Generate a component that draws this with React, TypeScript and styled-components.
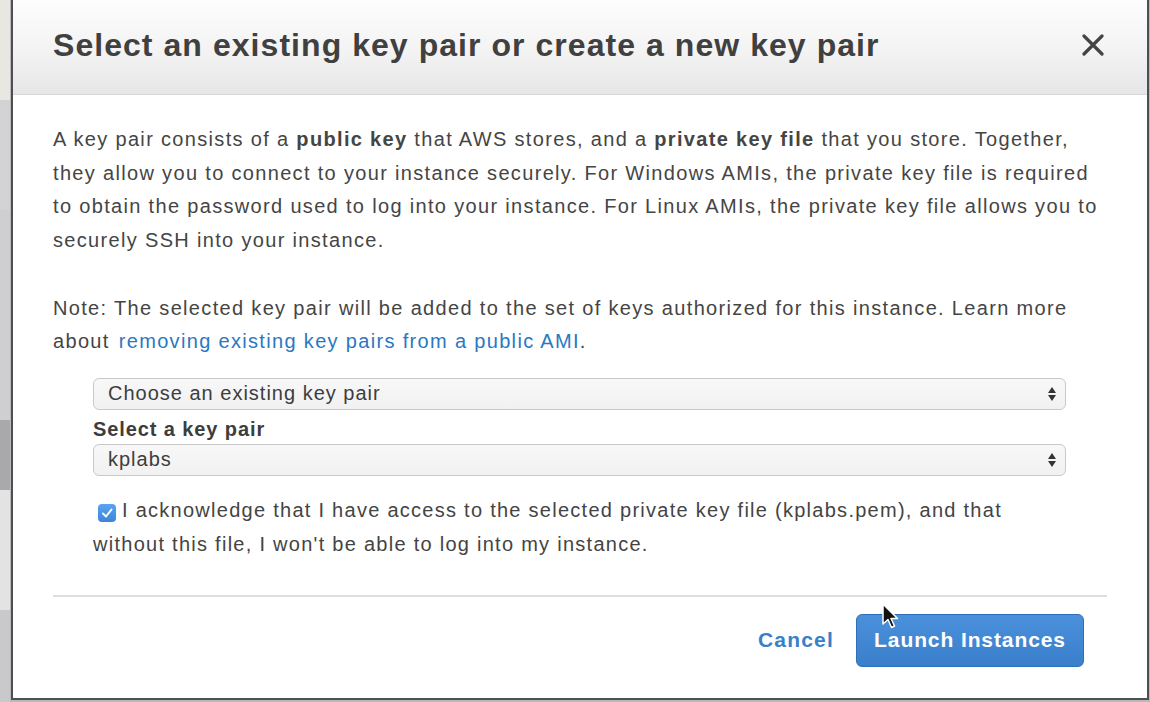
import React from "react";
import styled, { createGlobalStyle } from "styled-components";

const Global = createGlobalStyle`
  html, body { margin: 0; padding: 0; }
  body {
    width: 1150px; height: 702px; overflow: hidden;
    background: #b9b9bb;
    font-family: "Liberation Sans", Arial, Helvetica, sans-serif;
  }
`;

const Page = styled.div`
  position: relative;
  display: flex;
  width: 1150px;
  height: 702px;
`;

const Backdrop = styled.div`
  width: 10px;
  display: flex;
  flex-direction: column;
  background: #c7c7c9;
  overflow: hidden;
`;

const BackdropBand = styled.div<{ $bg: string; $h: number }>`
  height: ${(p) => p.$h}px;
  background: ${(p) => p.$bg};
  flex: none;
`;

const Dialog = styled.div`
  width: 1134px;
  height: 698px;
  margin-left: 1px;
  background: #fff;
  border-left: 2px solid #4f4f53;
  border-right: 2px solid #4f4f53;
  border-bottom: 2px solid #4f4f53;
  display: flex;
  flex-direction: column;
  box-sizing: content-box;
`;

const Header = styled.div`
  height: 94px;
  flex: none;
  display: flex;
  align-items: center;
  justify-content: space-between;
  padding: 0 41px 0 40px;
  background: linear-gradient(to bottom, #fdfdfd 0%, #f3f3f3 55%, #e6e6e6 100%);
  border-bottom: 1px solid #d8d8d8;
`;

const Title = styled.h1`
  margin: 0;
  font-size: 32px;
  font-weight: 700;
  color: #404040;
  letter-spacing: 1.05px;
  padding-bottom: 4px;
  white-space: nowrap;
`;

const CloseButton = styled.button`
  border: 0;
  background: transparent;
  padding: 0;
  width: 26px;
  height: 26px;
  display: flex;
  align-items: center;
  justify-content: center;
  cursor: pointer;
  margin-bottom: 4px;
`;

const Body = styled.div`
  padding: 28px 40px 0 40px;
  display: flex;
  flex-direction: column;
  color: #454545;
  font-size: 20px;
  letter-spacing: 1.33px;
  line-height: 33.7px;
  white-space: nowrap;
`;

const Para = styled.p<{ $mb?: number }>`
  margin: 0 0 ${(p) => p.$mb ?? 0}px 0;
`;

const Link = styled.a`
  color: #2a78c2;
  text-decoration: none;
  margin-left: 9px;
`;

const Form = styled.div`
  margin: 19px 81px 0 80px;
  display: flex;
  flex-direction: column;
`;

const SelectBox = styled.div`
  height: 30px;
  border: 1px solid #c9c9c9;
  border-radius: 6px;
  background: linear-gradient(to bottom, #f8f8f8, #f1f1f1);
  display: flex;
  align-items: center;
  justify-content: space-between;
  padding: 0 8px 0 14px;
  font-size: 20px;
  letter-spacing: 1px;
  color: #3d3d3d;
`;

const FieldLabel = styled.div`
  font-weight: 700;
  font-size: 20px;
  letter-spacing: 0.9px;
  color: #3d3d3d;
  line-height: 22px;
  margin: 8px 0 4px 0;
`;

const Ack = styled.div`
  margin-top: 17px;
  font-size: 20px;
  letter-spacing: 1.27px;
  line-height: 34px;
  color: #444;
  white-space: nowrap;
`;

const Check = styled.span`
  display: inline-flex;
  vertical-align: -2px;
  width: 18px;
  height: 18px;
  margin: 0 6px 0 5px;
  border-radius: 4px;
  background: linear-gradient(to bottom, #5aa3ee, #3b86dc);
  align-items: center;
  justify-content: center;
`;

const Divider = styled.div`
  margin: 34px 40px 0 40px;
  height: 2px;
  background: #dedede;
`;

const Footer = styled.div`
  display: flex;
  justify-content: flex-end;
  align-items: center;
  gap: 22px;
  padding: 17px 63px 0 0;
`;

const CancelLink = styled.a`
  color: #3a7fc9;
  font-weight: 700;
  font-size: 21px;
  letter-spacing: 1.2px;
  text-decoration: none;
`;

const PrimaryButton = styled.button`
  width: 228px;
  height: 53px;
  border-radius: 6px;
  border: 1px solid #2f6fb8;
  background: linear-gradient(to bottom, #4a90db, #3a7fcb);
  color: #fff;
  font-family: inherit;
  font-weight: 700;
  font-size: 21px;
  letter-spacing: 0.9px;
  padding: 0;
`;

const Cursor = styled.svg`
  position: absolute;
  left: 881px;
  top: 603px;
`;

const Arrows = () => (
  <svg width="10" height="16" viewBox="0 0 10 16">
    <path d="M5 1 L9 7 H1 Z" fill="#333" />
    <path d="M5 15 L9 9 H1 Z" fill="#333" />
  </svg>
);

export default function App() {
  return (
    <>
      <Global />
      <Page>
        <Backdrop>
          <BackdropBand $bg="#e9e7e2" $h={100} />
          <BackdropBand $bg="#d3d3d5" $h={110} />
          <BackdropBand $bg="#cfcfd1" $h={210} />
          <BackdropBand $bg="#a9a9ab" $h={70} />
          <BackdropBand $bg="#e3e3e3" $h={120} />
          <BackdropBand $bg="#c9c9cb" $h={92} />
        </Backdrop>
        <Dialog>
          <Header>
            <Title>Select an existing key pair or create a new key pair</Title>
            <CloseButton aria-label="Close">
              <svg width="22" height="22" viewBox="0 0 22 22">
                <path d="M2 2 L20 20 M20 2 L2 20" stroke="#444" strokeWidth="3.2" strokeLinecap="round" />
              </svg>
            </CloseButton>
          </Header>
          <Body>
            <Para $mb={33.7}>
              A key pair consists of a <b>public key</b> that AWS stores, and a <b>private key file</b> that you store. Together,
              <br />
              they allow you to connect to your instance securely. For Windows AMIs, the private key file is required
              <br />
              to obtain the password used to log into your instance. For Linux AMIs, the private key file allows you to
              <br />
              securely SSH into your instance.
            </Para>
            <Para>
              Note: The selected key pair will be added to the set of keys authorized for this instance. Learn more
              <br />
              about<Link href="#">removing existing key pairs from a public AMI</Link>.
            </Para>
          </Body>
          <Form>
            <SelectBox>
              <span>Choose an existing key pair</span>
              <Arrows />
            </SelectBox>
            <FieldLabel>Select a key pair</FieldLabel>
            <SelectBox>
              <span>kplabs</span>
              <Arrows />
            </SelectBox>
            <Ack>
              <Check>
                <svg width="12" height="12" viewBox="0 0 12 12">
                  <path d="M2 6.5 L5 9.5 L10.5 2.5" stroke="#fff" strokeWidth="2" fill="none" strokeLinecap="round" strokeLinejoin="round" />
                </svg>
              </Check>
              I acknowledge that I have access to the selected private key file (kplabs.pem), and that
              <br />
              without this file, I won't be able to log into my instance.
            </Ack>
          </Form>
          <Divider />
          <Footer>
            <CancelLink href="#">Cancel</CancelLink>
            <PrimaryButton>Launch Instances</PrimaryButton>
          </Footer>
        </Dialog>
        <Cursor width="20" height="28" viewBox="0 0 20 28">
          <path d="M2 1 L2 21 L7 16.5 L10.5 24.5 L13.5 23 L10 15.5 L16.5 15.5 Z" fill="#111" stroke="#fff" strokeWidth="1.5" strokeLinejoin="round" />
        </Cursor>
      </Page>
    </>
  );
}
